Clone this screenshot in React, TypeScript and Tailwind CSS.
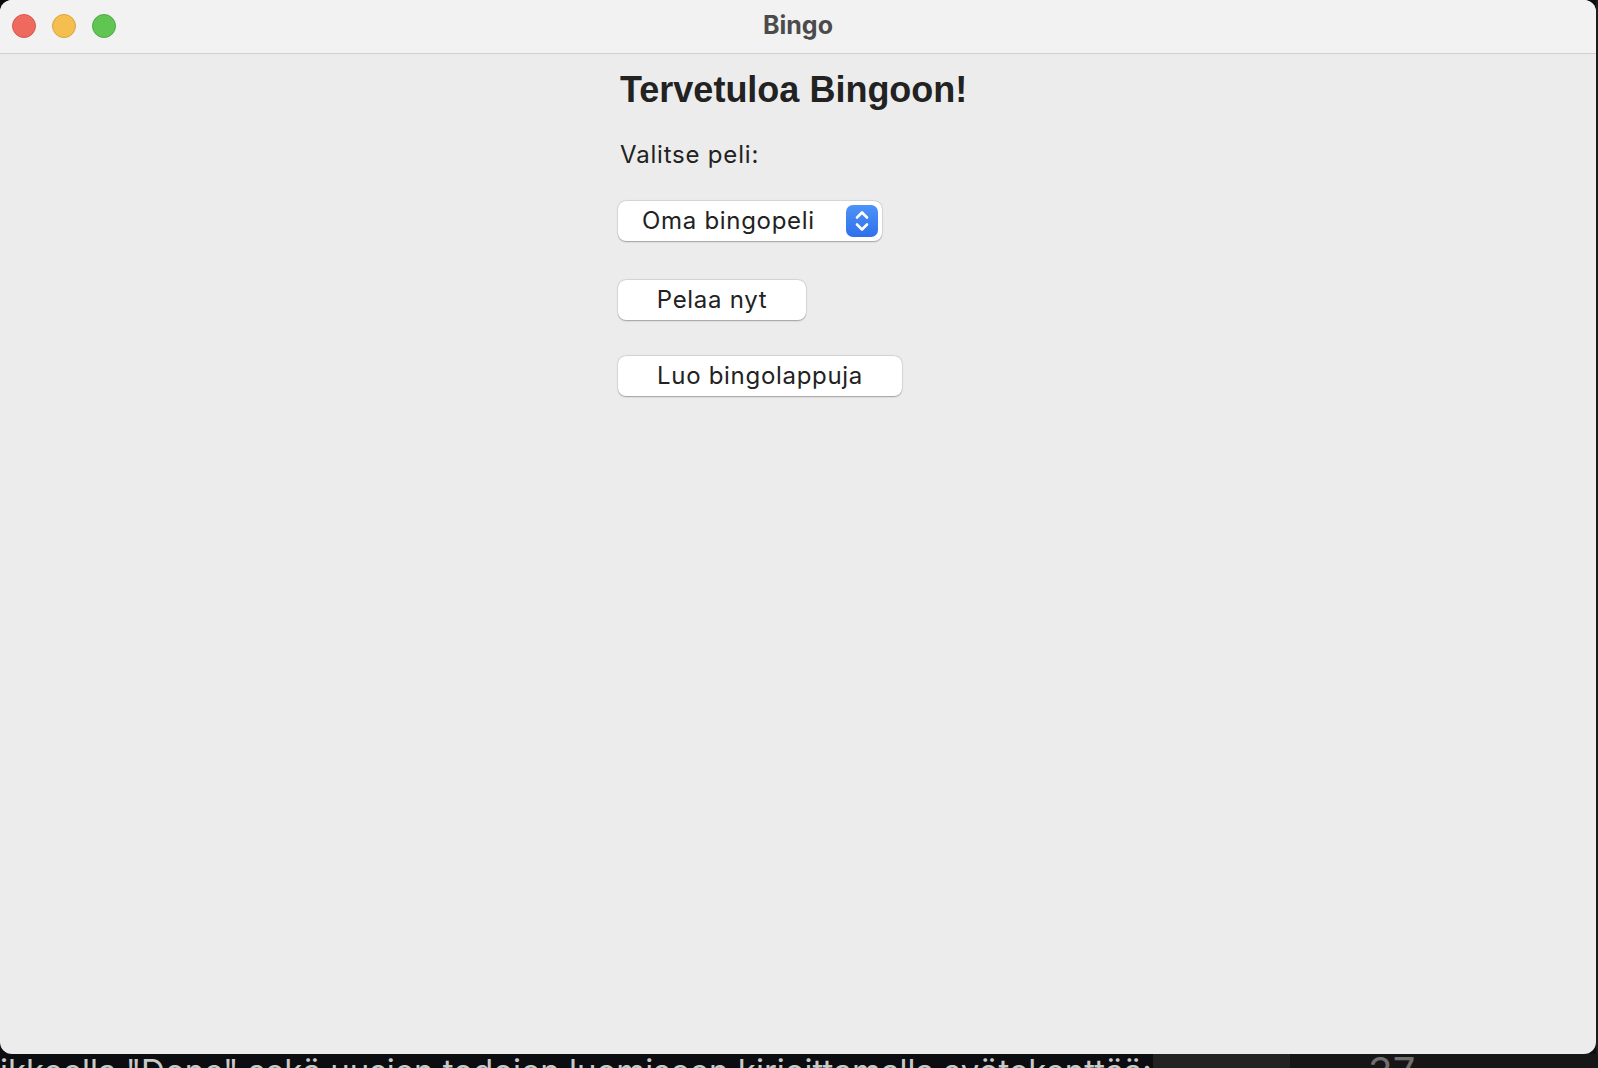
import { useState } from 'react';

const body = { fontFamily: 'Inter, "Noto Sans", sans-serif' };
const heading = { fontFamily: '"Liberation Sans", Arial, sans-serif' };

function TrafficLights() {
  return (
    <div className="flex items-center gap-4 pl-3 -mt-[1px]">
      <span className="h-6 w-6 rounded-full bg-[#ee6a5f] border border-[#d65a4e]" />
      <span className="h-6 w-6 rounded-full bg-[#f5bf4f] border border-[#d9a440]" />
      <span className="h-6 w-6 rounded-full bg-[#61c554] border border-[#51a947]" />
    </div>
  );
}

function Stepper() {
  return (
    <span className="flex h-8 w-8 items-center justify-center rounded-[7px] bg-gradient-to-b from-[#4d93f8] to-[#2f70ea]">
      <svg width="16" height="24" viewBox="0 0 16 24" fill="none" stroke="white" strokeWidth="2.6" strokeLinecap="round" strokeLinejoin="round">
        <path d="M3 8.5 8 3.5l5 5" />
        <path d="M3 15.5 8 20.5l5-5" />
      </svg>
    </span>
  );
}

function MacButton({ children, className }: { children: React.ReactNode; className?: string }) {
  return (
    <button
      type="button"
      className={`flex h-10 items-center justify-center rounded-[8px] bg-white text-[24px] leading-6 tracking-[0.7px] text-[#222] shadow-[0_0.5px_1.5px_rgba(0,0,0,0.3),0_0_0_0.5px_rgba(0,0,0,0.08)] ${className ?? ''}`}
      style={body}
    >
      {children}
    </button>
  );
}

export default function App() {
  const [game] = useState('Oma bingopeli');

  return (
    <div className="flex h-[1068px] w-[1598px] flex-col overflow-hidden bg-[#0c0d10]">
      <div className="flex h-[1054px] shrink-0">
        <div className="flex w-[1596px] flex-col overflow-hidden rounded-[12px] bg-[#ececec]">
          {/* title bar */}
          <div className="grid h-[54px] shrink-0 grid-cols-[1fr_auto_1fr] items-center border-b border-[#d0d0d0] bg-[#f2f2f2]">
            <TrafficLights />
            <span className="text-[25px] font-bold leading-[26px] text-[#4b4b4b] -mt-[4px]" style={body}>
              Bingo
            </span>
            <span />
          </div>

          {/* content */}
          <div className="flex flex-1 justify-center">
            <div className="flex w-[360px] flex-col items-start">
              <h1 className="mt-[18px] pl-[2px] text-[36px] font-bold leading-9 text-[#222]" style={heading}>
                Tervetuloa Bingoon!
              </h1>
              <p className="mt-[35px] pl-[2px] text-[24px] leading-6 tracking-[0.8px] text-[#222]" style={body}>
                Valitse peli:
              </p>

              <div className="mt-[34px] flex h-10 w-[264px] items-center justify-between rounded-[8px] bg-white pl-6 pr-1 shadow-[0_0.5px_1.5px_rgba(0,0,0,0.3),0_0_0_0.5px_rgba(0,0,0,0.08)]">
                <span className="text-[24px] leading-6 tracking-[0.7px] text-[#222]" style={body}>{game}</span>
                <Stepper />
              </div>

              <MacButton className="mt-[39px] w-[188px]">Pelaa nyt</MacButton>
              <MacButton className="mt-[36px] w-[284px]">Luo bingolappuja</MacButton>
            </div>
          </div>
        </div>
        <div className="flex-1 bg-[#1b1c20]" />
      </div>

      {/* background peeking out below the window */}
      <div className="flex h-[14px] shrink-0 overflow-hidden">
        <div className="w-[1153px] shrink-0 overflow-hidden">
          <p className="mt-[1px] whitespace-nowrap text-[33px] leading-[33px] text-[#c9c9c9]" style={body}>
            ikkeella "Done" sekä uusien todoien luomiseen kirjoittamalla syötekenttää:
          </p>
        </div>
        <div className="w-[137px] shrink-0 bg-[#232323]" />
        <div className="flex-1 bg-[#161616] pl-[78px]">
          <span className="mt-[-2px] block text-[40px] leading-10 text-[#6f6f6f]" style={body}>37</span>
        </div>
      </div>
    </div>
  );
}
